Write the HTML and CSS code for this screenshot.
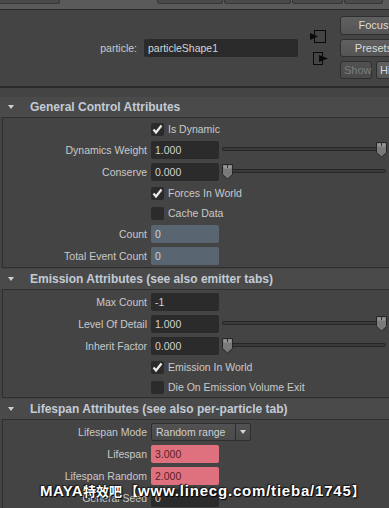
FILE: index.html
```html
<!DOCTYPE html>
<html>
<head>
<meta charset="utf-8">
<link rel="stylesheet" href="styles.css">
</head>
<body>
<div class="tabs">
  <div class="tab t1"></div>
  <div class="tab t2"></div>
  <div class="tab t3"></div>
  <div class="tab t4"></div>
  <div class="tab t5"></div>
</div>
<div class="nodebar">
  <div class="nodemain">
    <span class="nodelabel">particle:</span>
    <div class="nodefield">particleShape1</div>
  </div>
  <div class="conn">
    <svg class="cicon in" width="16" height="14" viewBox="0 0 16 14"><rect x="4.5" y="0.5" width="11" height="12" fill="none" stroke="#0a0a0a"/><polygon points="0,3 8,6.5 0,10" fill="#0a0a0a"/></svg>
    <svg class="cicon out" width="16" height="14" viewBox="0 0 16 14"><rect x="0.5" y="0.5" width="9" height="12" fill="none" stroke="#0a0a0a"/><polygon points="6,3 15,6.5 6,10" fill="#0a0a0a"/></svg>
  </div>
  <div class="btncol">
    <div class="btn wide b1">Focus</div>
    <div class="btn wide">Presets</div>
    <div class="btnrow"><div class="btn small dim">Show</div><div class="btn small">Hide</div></div>
  </div>
</div>
<div class="sep"></div>

<section class="frame">
  <div class="fhead"><span class="tri"></span>General Control Attributes</div>
  <div class="fbody">
    <div class="row chk"><span class="lbl"></span><span class="cb on"><svg width="13" height="13" viewBox="0 0 13 13"><path d="M2.5 6.5 L5 9.5 L10.5 2.5" fill="none" stroke="#ececec" stroke-width="2.2"/></svg></span><span class="cbt">Is Dynamic</span></div>
    <div class="row"><span class="lbl">Dynamics Weight</span><span class="fld">1.000</span><span class="slider"><span class="track"></span><svg class="thumb" style="left:154px" width="11" height="16" viewBox="0 0 11 16"><polygon points="0.5,0.5 10.5,0.5 10.5,10.5 5.5,15 0.5,10.5" fill="#7a7a7a" stroke="#262626"/><rect x="1.5" y="1.5" width="8" height="3" fill="#959595"/><rect x="5" y="1" width="1" height="3" fill="#333"/></svg></span></div>
    <div class="row"><span class="lbl">Conserve</span><span class="fld">0.000</span><span class="slider"><span class="track"></span><svg class="thumb" style="left:0px" width="11" height="16" viewBox="0 0 11 16"><polygon points="0.5,0.5 10.5,0.5 10.5,10.5 5.5,15 0.5,10.5" fill="#7a7a7a" stroke="#262626"/><rect x="1.5" y="1.5" width="8" height="3" fill="#959595"/><rect x="5" y="1" width="1" height="3" fill="#333"/></svg></span></div>
    <div class="row chk"><span class="lbl"></span><span class="cb on"><svg width="13" height="13" viewBox="0 0 13 13"><path d="M2.5 6.5 L5 9.5 L10.5 2.5" fill="none" stroke="#ececec" stroke-width="2.2"/></svg></span><span class="cbt">Forces In World</span></div>
    <div class="row chk"><span class="lbl"></span><span class="cb"></span><span class="cbt">Cache Data</span></div>
    <div class="row"><span class="lbl">Count</span><span class="fld blue">0</span></div>
    <div class="row"><span class="lbl">Total Event Count</span><span class="fld blue">0</span></div>
  </div>
</section>

<section class="frame">
  <div class="fhead"><span class="tri"></span>Emission Attributes (see also emitter tabs)</div>
  <div class="fbody">
    <div class="row"><span class="lbl">Max Count</span><span class="fld">-1</span></div>
    <div class="row"><span class="lbl">Level Of Detail</span><span class="fld">1.000</span><span class="slider"><span class="track"></span><svg class="thumb" style="left:154px" width="11" height="16" viewBox="0 0 11 16"><polygon points="0.5,0.5 10.5,0.5 10.5,10.5 5.5,15 0.5,10.5" fill="#7a7a7a" stroke="#262626"/><rect x="1.5" y="1.5" width="8" height="3" fill="#959595"/><rect x="5" y="1" width="1" height="3" fill="#333"/></svg></span></div>
    <div class="row"><span class="lbl">Inherit Factor</span><span class="fld">0.000</span><span class="slider"><span class="track"></span><svg class="thumb" style="left:0px" width="11" height="16" viewBox="0 0 11 16"><polygon points="0.5,0.5 10.5,0.5 10.5,10.5 5.5,15 0.5,10.5" fill="#7a7a7a" stroke="#262626"/><rect x="1.5" y="1.5" width="8" height="3" fill="#959595"/><rect x="5" y="1" width="1" height="3" fill="#333"/></svg></span></div>
    <div class="row chk"><span class="lbl"></span><span class="cb on"><svg width="13" height="13" viewBox="0 0 13 13"><path d="M2.5 6.5 L5 9.5 L10.5 2.5" fill="none" stroke="#ececec" stroke-width="2.2"/></svg></span><span class="cbt">Emission In World</span></div>
    <div class="row chk"><span class="lbl"></span><span class="cb"></span><span class="cbt">Die On Emission Volume Exit</span></div>
  </div>
</section>

<section class="frame">
  <div class="fhead"><span class="tri"></span>Lifespan Attributes (see also per-particle tab)</div>
  <div class="fbody">
    <div class="row"><span class="lbl">Lifespan Mode</span><span class="dd"><span class="ddtext">Random range</span><span class="ddarrow"><span class="ddtri"></span></span></span></div>
    <div class="row"><span class="lbl">Lifespan</span><span class="fld pink">3.000</span></div>
    <div class="row"><span class="lbl">Lifespan Random</span><span class="fld pink">2.000</span></div>
    <div class="row"><span class="lbl">General Seed</span><span class="fld">0</span></div>
  </div>
</section>

<div class="wm">MAYA<span class="cjk">特效吧 【</span><span class="url">www.linecg.com/tieba/1745</span><span class="cjk">】</span></div>
</body>
</html>
```

FILE: styles.css
```css
* { box-sizing: border-box; }
html, body { margin: 0; padding: 0; }
body {
  width: 389px;
  height: 508px;
  overflow: hidden;
  background: #444444;
  font-family: "Liberation Sans", Arial, sans-serif;
  font-size: 10.5px;
  color: #c9c9c9;
  position: relative;
}

/* top tab strip */
.tabs {
  height: 10px;
  background: #5a5a5a;
  border-bottom: 1px solid #2c2c2c;
  display: flex;
  align-items: flex-start;
}
.tab {
  flex: none;
  height: 4px;
  background: #4b4b4b;
  border: 1px solid #363636;
  border-top: none;
  border-radius: 0 0 3px 3px;
}
.t1 { width: 64px; margin-left: -4px; }
.t2 { width: 66px; margin-left: 97px; }
.t3 { width: 67px; margin-left: 1px; }
.t4 { width: 51px; margin-left: 1px; }
.t5 { width: 39px; margin-left: 1px; }

/* node name bar */
.nodebar {
  height: 76px;
  display: flex;
}
.nodemain {
  flex: none;
  width: 298px;
  display: flex;
  align-items: center;
  justify-content: flex-end;
  gap: 7px;
}
.nodelabel { color: #c9c9c9; }
.nodefield {
  width: 154px;
  height: 18px;
  line-height: 18px;
  background: #2b2b2b;
  border-radius: 2px;
  padding-left: 4px;
  color: #d4d4d4;
}
.conn {
  flex: none;
  width: 42px;
  display: flex;
  flex-direction: column;
  padding-top: 20px;
  gap: 8px;
}
.cicon { display: block; }
.cicon.in { margin-left: 12px; }
.cicon.out { margin-left: 15px; }
.btncol {
  flex: none;
  width: 70px;
  padding-top: 6px;
  display: flex;
  flex-direction: column;
  gap: 4px;
}
.btn {
  height: 18px;
  line-height: 16px;
  border: 1px solid #2f2f2f;
  border-radius: 3px;
  background: linear-gradient(#606060, #555555);
  color: #dadada;
  text-align: center;
  font-size: 11px;
  white-space: nowrap;
}
.btn.b1 { height: 19px; line-height: 17px; }
.btn.wide { width: 67px; }
.btnrow { display: flex; gap: 4px; }
.btn.small { width: 32px; text-align: left; padding-left: 3px; }
.btn.dim { color: #7c7c7c; background: linear-gradient(#515151, #4a4a4a); }

.sep {
  height: 2px;
  background: #2c2c2c;
  margin-bottom: 9px;
}

/* frame layouts */
.frame { margin-top: 1px; }
.fhead {
  height: 20px;
  background: #4a4a4a;
  display: flex;
  align-items: center;
  font-weight: bold;
  font-size: 12px;
  color: #c3cbd5;
  white-space: nowrap;
}
.tri {
  width: 0;
  height: 0;
  border-left: 3.5px solid transparent;
  border-right: 3.5px solid transparent;
  border-top: 4px solid #cfcfcf;
  margin-left: 8px;
  margin-right: 16px;
}
.fbody {
  margin-left: 2px;
  border: 1px solid #2f2f2f;
  border-right: none;
  padding-top: 1px;
  background: #444444;
}
.row {
  height: 22px;
  display: flex;
  align-items: center;
}
.row.chk { height: 20px; }
.lbl {
  flex: none;
  width: 144px;
  margin-right: 4px;
  text-align: right;
  white-space: nowrap;
}
.fld {
  flex: none;
  width: 68px;
  height: 18px;
  line-height: 18px;
  padding-left: 4px;
  background: #2b2b2b;
  border-radius: 2px;
  color: #d2d2d2;
}
.fld.blue { background: #5a6572; color: #cbd3dc; }
.fld.pink { background: #df717e; color: #5a1d24; }

.cb {
  flex: none;
  width: 13px;
  height: 13px;
  background: #2b2b2b;
  border-radius: 2px;
  display: block;
}
.cb svg { display: block; }
.cbt { margin-left: 4px; white-space: nowrap; }

.slider {
  flex: none;
  position: relative;
  width: 164px;
  height: 16px;
  margin-left: 3px;
}
.track {
  position: absolute;
  left: 0;
  right: 0;
  top: 5px;
  height: 4px;
  border: 1px solid #262626;
  border-radius: 2px;
  background: #3a3a3a;
}
.thumb { position: absolute; top: 0; }

.dd {
  flex: none;
  width: 100px;
  height: 18px;
  display: flex;
  border: 1px solid #2e2e2e;
  border-radius: 2px;
  background: linear-gradient(#525252, #4a4a4a);
  color: #d0d0d0;
}
.ddtext { flex: 1; padding-left: 4px; line-height: 16px; white-space: nowrap; }
.ddarrow {
  flex: none;
  width: 15px;
  border-left: 1px solid #2e2e2e;
  display: flex;
  align-items: center;
  justify-content: center;
}
.ddtri {
  width: 0;
  height: 0;
  border-left: 3.5px solid transparent;
  border-right: 3.5px solid transparent;
  border-top: 4px solid #d6d6d6;
}

/* watermark overlay */
.wm {
  position: absolute;
  left: 40px;
  top: 482px;
  font-family: "Liberation Sans", "Noto Sans CJK SC", sans-serif;
  font-weight: bold;
  font-size: 15px;
  line-height: 17px;
  color: #ffffff;
  white-space: nowrap;
  letter-spacing: 0.4px;
  text-shadow: 0 0 2px #000, 1px 1px 1px #000, -1px -1px 1px #222;
}
.wm .cjk { font-family: "Noto Sans CJK SC", sans-serif; font-size: 13px; letter-spacing: 0; }
.wm .url { letter-spacing: 0.8px; }
```
